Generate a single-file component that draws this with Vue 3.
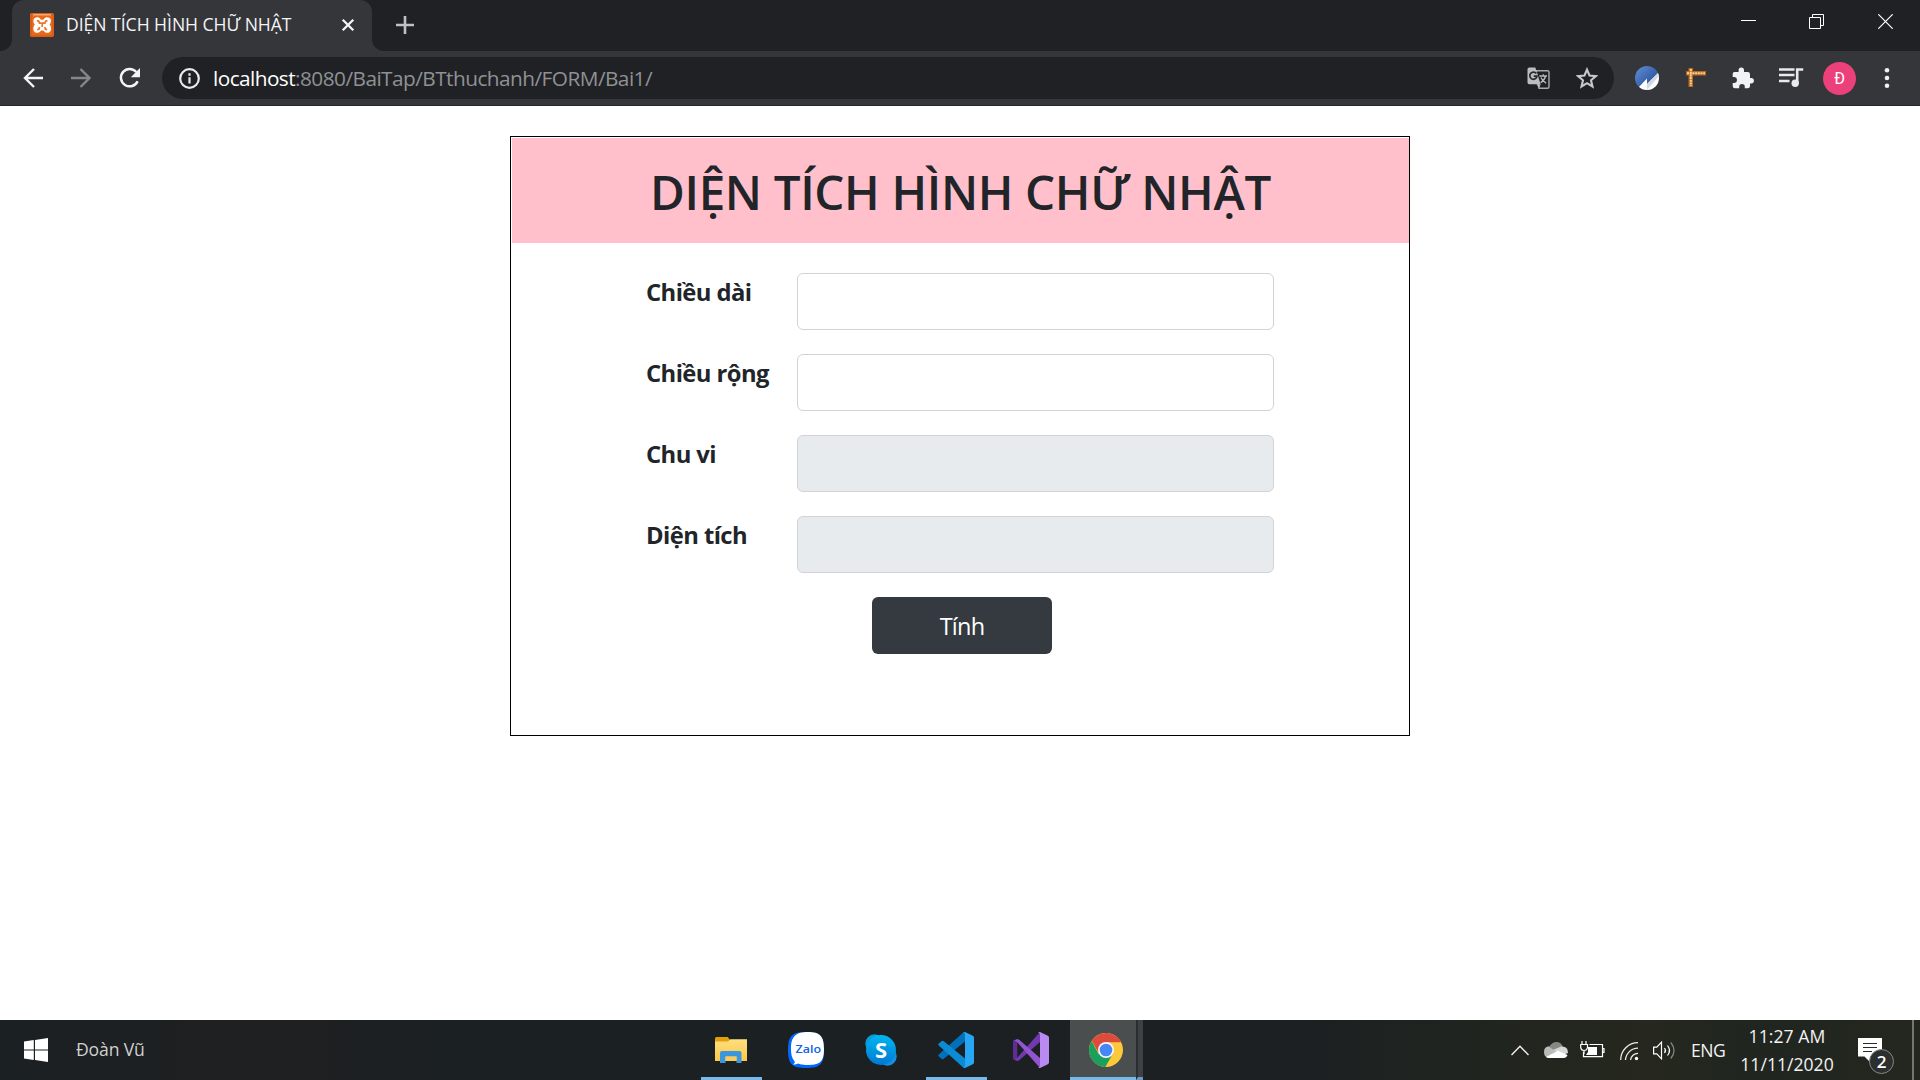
<script setup>
import { ref } from 'vue'

const fields = ref([
  { id: 'length', label: 'Chiều dài', value: '', readonly: false },
  { id: 'width', label: 'Chiều rộng', value: '', readonly: false },
  { id: 'perimeter', label: 'Chu vi', value: '', readonly: true },
  { id: 'area', label: 'Diện tích', value: '', readonly: true },
])
</script>

<template>
  <div class="screen">
    <header class="tabstrip">
      <div class="strip-edge"></div>
      <div class="tab">
        <svg class="favicon" width="24" height="24" viewBox="0 0 24 24">
          <rect width="24" height="24" rx="2" fill="#e8691b" />
          <rect x="1" y="1" width="22" height="22" rx="2" fill="none" stroke="#cf5510" />
          <rect x="3" y="1.2" width="18" height="1.2" fill="#f8b98c" />
          <g transform="translate(12.2 12) scale(1.17 1.27) translate(-12 -11.9)">
            <path d="M8 5.7C4.2 5.7 3.5 9 5.700 11.500c-2.300 2.600-1.500 6.600 2 6.600 2.200 0 2.400-1.900 4.300-1.900s2.100 1.900 4.300 1.900c3.500 0 4.300-4 2-6.600 2.200-2.500 1.500-5.800-2.300-5.800-2.100 0-2.100 2-4 2s-1.900-2-4-2z" fill="#fff" />
            <path d="M7.500 8.400q2 0 2.200 2.100h4.600q.2-2.100 2.200-2.100M7.800 15.500q1.900 0 1.900-2.100M16.200 15.500q-1.900 0-1.900-2.100M12 10.500v2.900" stroke="#ef7526" stroke-width="1.400" fill="none" />
          </g>
        </svg>
        <span class="tab-title">DIỆN TÍCH HÌNH CHỮ NHẬT</span>
        <svg class="tab-close" width="14" height="14" viewBox="0 0 14 14"><path d="M1.700 1.700l10.600 10.600M12.300 1.700L1.700 12.300" stroke="#f4f4f5" stroke-width="2.300" /></svg>
      </div>
      <svg class="new-tab" width="18" height="18" viewBox="0 0 18 18"><path d="M9 0v18M0 9h18" stroke="#bfc1c5" stroke-width="2.600" /></svg>
      <div class="window-controls">
        <svg width="15" height="15" viewBox="0 0 15 15" shape-rendering="crispEdges"><rect y="6" width="15" height="1" fill="#fff" /></svg>
        <svg class="restore" width="15" height="15" viewBox="0 0 15 15"><path d="M.5 3.500h11v11H.5zM3.500 3.500v-3h11v11h-3" fill="none" stroke="#fff" /></svg>
        <svg width="15" height="15" viewBox="0 0 15 15"><path d="M.3.3l14.400 14.400M14.700.3L.3 14.700" stroke="#fff" stroke-width="1.200" /></svg>
      </div>
    </header>

    <nav class="toolbar">
      <div class="nav-buttons">
        <svg width="21" height="20" viewBox="0 0 21 20"><path d="M20 10H2M11 1L2 10l9 9" fill="none" stroke="#f3f4f5" stroke-width="2.400" /></svg>
        <svg width="21" height="20" viewBox="0 0 21 20"><path d="M0 10h18.500M9.500 1l9 9-9 9" fill="none" stroke="#85878a" stroke-width="2.400" /></svg>
        <svg width="22" height="22" viewBox="0 0 22 22"><path d="M18.600 14.200A8.700 8.700 0 1 1 17.300 5" fill="none" stroke="#f3f4f5" stroke-width="2.500" /><path d="M21 1v9.200h-9.200z" fill="#f3f4f5" /></svg>
      </div>
      <div class="omnibox">
        <svg width="21" height="21" viewBox="0 0 21 21"><circle cx="10.500" cy="10.500" r="9.300" fill="none" stroke="#e8eaed" stroke-width="2.200" /><path d="M10.500 9.300v6.200M10.500 5.300v2.400" stroke="#e8eaed" stroke-width="2.200" /></svg>
        <span class="url"><span class="host">localhost</span><span class="path">:8080/BaiTap/BTthuchanh/FORM/Bai1/</span></span>
        <svg class="translate" width="23" height="23" viewBox="0 0 23 23">
          <path d="M9 3.700h11.500a1.500 1.500 0 0 1 1.500 1.500v14.600a1.500 1.500 0 0 1-1.500 1.500H12z" fill="none" stroke="#aaaaab" stroke-width="1.400" />
          <path d="M2.300.5h6l1 3 4.300 13.700H2.300A1.800 1.800 0 0 1 .5 15.400V2.300A1.800 1.800 0 0 1 2.300.5z" fill="#bdbdbe" />
          <path d="M9.500 17.200h4.100L12 21.300z" fill="#bdbdbe" />
          <path d="M9.400 6.600A3.600 3.600 0 1 0 10 9.200H6.700" fill="none" stroke="#292a2d" stroke-width="1.700" />
          <path d="M12.300 9h7.700M16.300 7.300V9M18.600 9q-1 4.200-5 6.800M13.900 10.500q1.500 3.400 5.200 5.600" fill="none" stroke="#b9b9ba" stroke-width="1.300" />
        </svg>
        <svg class="star" width="22" height="22" viewBox="0 0 22 22"><path d="M11 2.600l2.500 5.900 6.400.6-4.900 4.200 1.500 6.200-5.500-3.300-5.500 3.300L7 13.300 2.100 9.100l6.400-.6z" fill="none" stroke="#c7c8ca" stroke-width="2.100" /></svg>
      </div>
      <div class="extensions">
        <svg width="24" height="24" viewBox="0 0 24 24">
          <defs>
            <linearGradient id="blueDisc" x1="0" y1="0" x2="1" y2="1"><stop offset="0" stop-color="#6290d6" /><stop offset=".6" stop-color="#365fa9" /></linearGradient>
            <clipPath id="disc"><circle cx="12" cy="12" r="12" /></clipPath>
          </defs>
          <g clip-path="url(#disc)"><rect width="24" height="24" fill="url(#blueDisc)" /><path d="M3 22l9-9.500V18L24 6v18H3z" fill="#fff" /><path d="M12 24v-6L24 6v4z" fill="#d8d9dc" /></g>
        </svg>
        <svg class="ruler" width="20" height="20" viewBox="0 0 20 20"><path d="M0 3h20v4.500H7V19H2.500V7.500H0zM2.500 0H7v3H2.500z" fill="#b9681f" /><path d="M1 5.200h18M4.800 1v17" stroke="#fbd29a" stroke-width="2" stroke-dasharray="2 .7" /></svg>
        <svg class="puzzle" width="22" height="22" viewBox="0 0 22 22"><path d="M1 5h5.600V3.300a2.700 2.700 0 0 1 5.400 0V5h3.700Q18 5 18 7.300V11h1.200a2.700 2.700 0 0 1 0 5.400H18v2.500q0 2.300-2.300 2.300h-2.900v-1.300a2.800 2.800 0 0 0-5.600 0v1.300H3q-2.300 0-2.300-2.300v-3H2A2.800 2.800 0 0 0 2 10H.7V7Q.7 5 2.500 5z" fill="#f1f2f4" /></svg>
        <svg class="music" width="25" height="20" viewBox="0 0 25 20"><path d="M0 1.500h15.500M0 7h15.500M0 13h10.500" stroke="#e9eaed" stroke-width="2.300" /><path d="M18.200 15.300V1.500h6" fill="none" stroke="#e9eaed" stroke-width="2.600" /><circle cx="16.200" cy="15.200" r="3.700" fill="#e9eaed" /></svg>
        <span class="avatar">Đ</span>
        <svg class="menu" width="6" height="20" viewBox="0 0 6 20"><circle cx="3" cy="2.300" r="2.300" fill="#f0f1f2" /><circle cx="3" cy="10" r="2.300" fill="#f0f1f2" /><circle cx="3" cy="17.700" r="2.300" fill="#f0f1f2" /></svg>
      </div>
    </nav>

    <main class="page">
      <form class="card" @submit.prevent>
        <h1><span>DIỆN TÍCH HÌNH CHỮ NHẬT</span></h1>
        <div class="fields">
          <div v-for="field in fields" :key="field.id" class="row">
            <label :for="field.id">{{ field.label }}</label>
            <input :id="field.id" v-model="field.value" type="text" :readonly="field.readonly" autocomplete="off" />
          </div>
        </div>
        <button type="submit">Tính</button>
      </form>
    </main>

    <footer class="taskbar">
      <svg class="start" width="24" height="24" viewBox="0 0 24 24"><path d="M0 3.400l9.800-1.300v9.300H0zM11 1.900L24 0v11.400H11zM0 12.600h9.800v9.300L0 20.600zM11 12.600h13V24l-13-1.900z" fill="#fff" /></svg>
      <span class="user">Đoàn Vũ</span>
      <div class="apps">
        <div class="app explorer open">
          <svg width="32" height="28" viewBox="0 0 32 28">
            <defs><linearGradient id="folder" x1="0" y1="0" x2="0" y2="1"><stop offset="0" stop-color="#ffdf80" /><stop offset="1" stop-color="#fbc748" /></linearGradient></defs>
            <path d="M0 2.500Q0 1 1.500 1h11.200l2.500 3H31v3H0z" fill="#e3a008" />
            <path d="M0 5.500h13l2.500-2.300H32V25H0z" fill="url(#folder)" />
            <path d="M5 27V17q0-2 2-2h17.500q2 0 2 2v10h-5v-6.500H10.500V27z" fill="#3a96dd" />
            <path d="M10.500 20.500h11V25h-11z" fill="#f5cc5d" />
          </svg>
        </div>
        <div class="app">
          <svg width="36" height="36" viewBox="0 0 36 36">
            <path d="M18 0c14 0 18 4 18 18s-4 18-18 18S0 32 0 18 4 0 18 0z" fill="#0068ff" />
            <path d="M20 0c12 0 16 4 16 17s-4 16-17 16c-5 0-7-1-9-1.500-1.500 1-3 1.300-5 1 1.500-1 2-2 1.700-3C3.600 26 3 22 3 17 3 4 8 0 20 0z" fill="#fff" />
            <text x="7.500" y="21" textLength="25.500" lengthAdjust="spacingAndGlyphs" class="zalo-text">Zalo</text>
          </svg>
        </div>
        <div class="app">
          <svg width="32" height="32" viewBox="0 0 32 32">
            <defs><linearGradient id="skype" x1="0" y1="0" x2="0" y2="1"><stop offset="0" stop-color="#00b7f0" /><stop offset="1" stop-color="#0078d4" /></linearGradient></defs>
            <circle cx="9.500" cy="9.500" r="9.200" fill="#079bdc" /><circle cx="22.500" cy="22.500" r="9.200" fill="#1490df" />
            <circle cx="16" cy="16" r="15" fill="url(#skype)" />
            <text x="16" y="24" text-anchor="middle" class="skype-text">S</text>
          </svg>
        </div>
        <div class="app open">
          <svg width="36" height="36" viewBox="0 0 36 36">
            <path d="M27 0v9.500L5.800 26.700q-1.300 1-2.400 0L.8 24.500q-1-1 0-2L25.200.5z" fill="#0070b8" />
            <path d="M27 36v-9.500L5.800 9.300q-1.300-1-2.400 0L.8 11.500q-1 1 0 2l24.400 22z" fill="#0c8ad3" />
            <path d="M27 0l7.800 3.700Q36 4.400 36 5.600v24.800q0 1.200-1.200 1.900L27 36q-1 0-2-.8 2 .3 2-1.700v-31Q27 .5 25 .8 26 0 27 0z" fill="#27a6f3" />
          </svg>
        </div>
        <div class="app">
          <svg width="36" height="36" viewBox="0 0 36 36">
            <path d="M0 9l4-2 2.500 1L4.300 10v16l2.200 2L4 29l-4-2z" fill="#5d2d91" />
            <path d="M27 0v10L6.500 28q-1 1-2.500.8L0 27q2 .6 4-1z" fill="#7338b0" />
            <path d="M27 36V26L6.500 8Q5.500 7 4 7.200L0 9q2-.6 4 1z" fill="#9254cf" />
            <path d="M27 0l7.800 3.700Q36 4.400 36 5.600v24.800q0 1.200-1.200 1.900L27 36q-1 0-2-.8 2 .3 2-1.700v-31Q27 .5 25 .8 26 0 27 0z" fill="#b98af2" />
          </svg>
        </div>
        <div class="app chrome open">
          <svg width="34" height="34" viewBox="0 0 34 34">
            <circle cx="17" cy="17" r="17" fill="#fdc93a" />
            <path d="M17 17L9.700 21.200 2.600 8A17 17 0 0 0 16.300 34l7.300-12.800z" fill="#1a9f5c" />
            <path d="M17 9.200h15.100A17 17 0 0 0 2.800 7.800l7.400 13.100z" fill="#dd4b3e" />
            <circle cx="17" cy="17" r="8" fill="#f4f6f8" /><circle cx="17" cy="17" r="6.300" fill="#4687f4" />
          </svg>
        </div>
        <div class="stacked"></div>
      </div>
      <div class="tray">
        <svg class="chevron" width="18" height="11" viewBox="0 0 18 11"><path d="M.5 10L9 1.200l8.500 8.800" fill="none" stroke="#f0f0ef" stroke-width="1.400" /></svg>
        <svg class="cloud" width="24" height="16" viewBox="0 0 24 16">
          <path d="M5 5Q8 0 12.500 0T19 5l-7 5z" fill="#858884" />
          <path d="M10 8L4.500 4.200Q0 5 0 10q0 4 3 5.500l12-5z" fill="#b9bbb8" />
          <path d="M9 8l8-3.400Q24 4 24 11l-5 2z" fill="#d6d7d5" />
          <path d="M2 15l12-6.200L23.500 13q-1 3-4 3H5q-2 0-3-1z" fill="#fff" />
        </svg>
        <svg class="battery" width="25" height="18" viewBox="0 0 25 18"><path d="M9.500 3.500h13v12.200H3.500V11M22.500 7.500h1.500v4h-1.500" fill="none" stroke="#fff" stroke-width="1.200" /><path d="M8 6h9v8H6l2-3z" fill="#fff" /><path d="M2 0v3.500M6 0v3.500M.7 3.500h6.800v3Q7 9.500 4 9.500T.7 6.500zM4 9.500V13" fill="#22251f" stroke="#fff" stroke-width="1.200" /></svg>
        <svg class="wifi" width="19" height="19" viewBox="0 0 19 19"><path d="M.7 18A17.300 17.300 0 0 1 18 .7M5.500 18A12.500 12.500 0 0 1 18 6.200M10.500 18A7.500 7.500 0 0 1 18 11.300" fill="none" stroke="#ecedeb" stroke-width="1.300" /><circle cx="16.500" cy="16.500" r="1.700" fill="#fff" /></svg>
        <svg class="speaker" width="23" height="19" viewBox="0 0 23 19"><path d="M.6 6.200h3.200L8.500 1.200v16.600l-4.700-5H.6z" fill="none" stroke="#fff" stroke-width="1.200" /><path d="M11.500 7q2 2.500 0 5M14.500 4.500q4 5 0 10" fill="none" stroke="#fff" stroke-width="1.200" /><path d="M17.800 1.500q6.500 8 0 16" fill="none" stroke="#858783" stroke-width="1.200" /></svg>
        <span class="lang">ENG</span>
        <div class="clock"><span class="time">11:27 AM</span><span class="date">11/11/2020</span></div>
        <div class="notice">
          <svg width="24" height="24" viewBox="0 0 24 24"><path d="M0 0h24v18.500H12L12 24l-5.500-5.500H0z" fill="#fff" /><path d="M5 5.500h14M5 9.500h14M5 13.500h9" stroke="#262b28" stroke-width="1.100" /></svg>
          <span class="badge">2</span>
        </div>
        <div class="show-desktop"></div>
      </div>
    </footer>
  </div>
</template>

<style>
body { margin: 0; overflow: hidden; }
</style>

<style scoped>
* { box-sizing: border-box; }
svg { display: block; flex: none; }
.screen { width: 1920px; height: 1080px; display: flex; flex-direction: column; background: #fff; font-family: "Open Sans", "Noto Sans", sans-serif; white-space: nowrap; overflow: hidden; }

.tabstrip { height: 51px; display: flex; background: #35363a; flex: none; position: relative; isolation: isolate; }
.tabstrip::after { content: ""; position: absolute; left: 372px; right: 0; top: 0; bottom: 0; background: #202124; border-bottom-left-radius: 12px; z-index: -1; }
.strip-edge { width: 12px; background: #202124; border-bottom-right-radius: 12px; }
.tab { width: 360px; height: 51px; display: flex; align-items: center; padding: 0 17px 1px 18px; background: linear-gradient(#202124, #202124) 0 0 / 100% 14px no-repeat; position: relative; z-index: 0; }
.tab::before { content: ""; position: absolute; inset: 0; z-index: -1; background: #35363a; border-radius: 12px 12px 0 0; }
.tab-title { margin-left: 12px; flex: 1; color: #f3f4f5; font-size: 17.600px; letter-spacing: -0.040px; line-height: 24px; padding-bottom: 2px; }
.new-tab { margin-top: 16px; margin-left: 24px; }
.window-controls { margin-left: auto; display: flex; gap: 53px; padding: 14px 27px 0 0; }
.restore { margin-right: 1px; }

.toolbar { height: 55px; flex: none; display: flex; align-items: center; background: #35363a; border-bottom: 1px solid #242528; }
.nav-buttons { width: 162px; display: flex; align-items: center; gap: 27px; padding-left: 22.500px; }
.omnibox { width: 1452px; height: 42px; border-radius: 21px; background: #202124; display: flex; align-items: center; padding: 0 16px 0 17px; }
.url { margin-left: 13px; flex: 1; font-size: 20.800px; line-height: 30px; color: #8f9195; }
.host { color: #fff; letter-spacing: -0.560px; }
.path { letter-spacing: -0.540px; }
.star { margin-left: 26px; }
.extensions { display: flex; align-items: center; margin-left: 21px; }
.ruler { margin-left: 27px; }
.puzzle { margin-left: 26px; }
.music { margin-left: 25px; }
.avatar { width: 33px; height: 33px; margin-left: 19px; border-radius: 50%; background: #ec407a; color: #fff; font: 16px/33px Roboto, sans-serif; text-align: center; }
.menu { margin-left: 28px; }

.page { flex: 1; padding-top: 30px; }
.card { width: 900px; height: 600px; margin: 0 auto; border: 1px solid #000; padding: 1px 0 0 1px; display: flex; flex-direction: column; color: #212529; }
h1 { margin: 0; height: 105px; background: #ffc0cb; text-align: center; font-size: 47.500px; font-weight: 600; line-height: 107px; letter-spacing: -0.350px; flex: none; }
.fields { padding: 30px 0 0 134px; }
.row { display: flex; margin-bottom: 24px; }
label { width: 151px; font-size: 23.800px; font-weight: 700; line-height: 39px; letter-spacing: -0.570px; }
input { width: 477px; height: 57px; border: 1px solid #ced4da; border-radius: 6px; background: #fff; outline: 0; padding: 9px 18px; font: 24px "Open Sans", sans-serif; }
input:read-only { background: #e8ebee; }
button { width: 180px; height: 57px; margin-left: 360px; border: 0; border-radius: 6px; background: #343a40; color: #fff; font: 23.500px/57px "Open Sans", sans-serif; letter-spacing: -0.750px; padding: 1px 0 0; }

.taskbar { height: 60px; flex: none; display: flex; background: linear-gradient(90deg, #1b2023 0, #1f2021 14%, #1b2023 24%, #1c2022 68%, #21251f 78%, #26281f 86%, #202520 91%, #23271f 100%); color: #f3f3f2; font-size: 17.600px; }
.start { margin: 18px 0 0 24px; }
.user { width: 625px; margin-left: 28px; line-height: 59px; color: #cfd0d0; letter-spacing: -0.150px; }
.apps { display: flex; width: 442px; }
.app { width: 61px; margin-right: 14px; padding-right: 1px; display: flex; align-items: center; justify-content: center; height: 60px; }
.app.open { border-bottom: 3px solid #76b9ed; padding-top: 3px; }
.app.explorer svg { margin-right: 1px; }
.app.chrome { width: 66px; margin: 0 0 0 -6px; padding-left: 6px; padding-right: 0; background: #4b4e4f; }
.stacked { width: 7px; height: 60px; background: #3e4142; border-left: 2px solid #2b2e2f; border-bottom: 3px solid #659cca; }
.zalo-text { font: 600 11.500px "Open Sans", sans-serif; fill: #1263e6; }
.skype-text { font: 700 22px "Open Sans", sans-serif; fill: #fff; }
.tray { margin-left: auto; display: flex; align-items: center; }
.cloud { margin-left: 15px; }
.battery { margin-left: 12px; }
.wifi { margin: 2px 0 0 15px; }
.speaker { margin-left: 14px; }
.lang { width: 50px; margin-left: 15px; letter-spacing: -0.500px; padding-bottom: 1px; }
.clock { width: 92px; display: flex; flex-direction: column; align-items: center; line-height: 28px; }
.time { letter-spacing: 0.050px; }
.date { letter-spacing: 0; }
.notice { position: relative; width: 54px; margin-left: 25px; height: 24px; }
.badge { position: absolute; left: 11px; top: 11px; width: 25px; height: 25px; border: 1px solid #858786; border-radius: 50%; background: #2c2f2f; color: #fff; font-size: 17px; font-weight: 600; line-height: 23px; text-align: center; }
.show-desktop { width: 8px; height: 60px; border-left: 2px solid #747674; }
</style>
